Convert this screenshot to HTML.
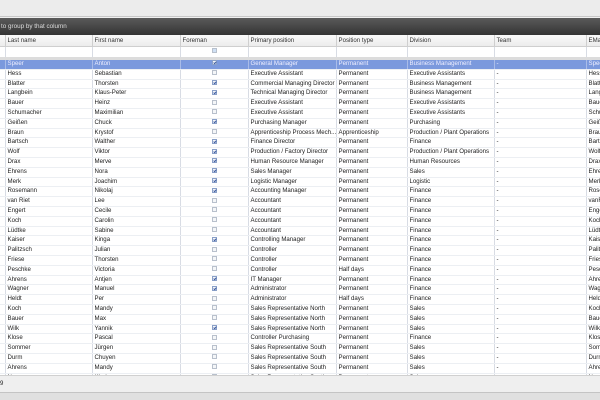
<!DOCTYPE html><html><head><meta charset="utf-8"><style>
*{margin:0;padding:0;box-sizing:border-box}
body{width:600px;height:400px;overflow:hidden;background:#f0f0f0;font-family:"Liberation Sans",sans-serif;font-size:6px;color:#222;position:relative}
#top{position:absolute;left:0;top:0;width:600px;height:17px;background:#ececec;border-bottom:1px solid #c8c8c8}
#grp{position:absolute;left:0;top:18px;width:600px;height:17px;background:linear-gradient(#5a5a5a,#343434);color:#ddd;font-size:6.3px;line-height:17px;padding-left:1px}
#grid{position:absolute;left:0;top:35px;width:600px;height:340px;overflow:hidden;background:#fff}
table{border-collapse:collapse;table-layout:fixed;width:620px}
td{border-right:1px solid #d8dce4;border-bottom:1px solid #eceff3;white-space:nowrap;overflow:hidden;padding-left:2px;height:9.8px;line-height:8.8px;font-size:6.1px}
tr.h td{height:11px;line-height:11px;background:linear-gradient(#fafafa,#ececec);border-right:1px solid #cfcfcf;border-bottom:1px solid #cfcfcf;color:#333;font-size:6.1px}
tr.f td{height:12px;background:#fff;border-bottom:3px solid #dcdcdc}
tr.s td{background:#7b99dd;color:#eef;border-right-color:#a9bce8}
td.c{text-align:center;padding:0}
.cb{display:inline-block;width:5px;height:5px;border:1px solid #b8c0cc;background:#f4f6f8;vertical-align:middle;position:relative;top:-0.5px}
.cb.k{border-color:#8aa0c8}
.cb.k:after{content:"";position:absolute;left:1px;top:0;width:1px;height:2px;border:solid #3a5aa0;border-width:0 1px 1px 0;transform:rotate(40deg)}
#foot{position:absolute;left:0;top:375px;width:600px;height:18px;background:#efefef;border-top:1px solid #d0d0d0;font-size:6px;line-height:17px}
#bot{position:absolute;left:0;top:392px;width:600px;height:8px;background:#e0e0e0;border-top:1px solid #c4c4c4}
</style></head><body>
<div id="top"></div>
<div id="grp">to group by that column</div>
<div id="grid"><table>
<colgroup><col style="width:5px"><col style="width:87px"><col style="width:88px"><col style="width:68px"><col style="width:88px"><col style="width:71px"><col style="width:87px"><col style="width:92px"><col style="width:34px"></colgroup>
<tr class="h"><td></td><td>Last name</td><td>First name</td><td>Foreman</td><td>Primary position</td><td>Position type</td><td>Division</td><td>Team</td><td>EMail</td></tr>
<tr class="f"><td></td><td></td><td></td><td class="c"><span class="cb" style="background:#cfe0f4"></span></td><td></td><td></td><td></td><td></td><td></td></tr>
<tr class="s"><td></td><td>Speer</td><td>Anton</td><td class="c"><span class="cb k"></span></td><td>General Manager</td><td>Permanent</td><td>Business Management</td><td>-</td><td>Speer</td></tr>
<tr><td></td><td>Hess</td><td>Sebastian</td><td class="c"><span class="cb"></span></td><td>Executive Assistant</td><td>Permanent</td><td>Executive Assistants</td><td>-</td><td>Hess</td></tr>
<tr><td></td><td>Blatter</td><td>Thorsten</td><td class="c"><span class="cb k"></span></td><td>Commercial Managing Director</td><td>Permanent</td><td>Business Management</td><td>-</td><td>Blatter</td></tr>
<tr><td></td><td>Langbein</td><td>Klaus-Peter</td><td class="c"><span class="cb k"></span></td><td>Technical Managing Director</td><td>Permanent</td><td>Business Management</td><td>-</td><td>Langbein</td></tr>
<tr><td></td><td>Bauer</td><td>Heinz</td><td class="c"><span class="cb"></span></td><td>Executive Assistant</td><td>Permanent</td><td>Executive Assistants</td><td>-</td><td>Bauer</td></tr>
<tr><td></td><td>Schumacher</td><td>Maximilian</td><td class="c"><span class="cb"></span></td><td>Executive Assistant</td><td>Permanent</td><td>Executive Assistants</td><td>-</td><td>Schum</td></tr>
<tr><td></td><td>Geißen</td><td>Chuck</td><td class="c"><span class="cb k"></span></td><td>Purchasing Manager</td><td>Permanent</td><td>Purchasing</td><td>-</td><td>Geißen</td></tr>
<tr><td></td><td>Braun</td><td>Krystof</td><td class="c"><span class="cb"></span></td><td>Apprenticeship Process Mech...</td><td>Apprenticeship</td><td>Production / Plant Operations</td><td>-</td><td>Braun</td></tr>
<tr><td></td><td>Bartsch</td><td>Walther</td><td class="c"><span class="cb k"></span></td><td>Finance Director</td><td>Permanent</td><td>Finance</td><td>-</td><td>Bartsch</td></tr>
<tr><td></td><td>Wolf</td><td>Viktor</td><td class="c"><span class="cb k"></span></td><td>Production / Factory Director</td><td>Permanent</td><td>Production / Plant Operations</td><td>-</td><td>Wolf</td></tr>
<tr><td></td><td>Drax</td><td>Merve</td><td class="c"><span class="cb k"></span></td><td>Human Resource Manager</td><td>Permanent</td><td>Human Resources</td><td>-</td><td>Drax</td></tr>
<tr><td></td><td>Ehrens</td><td>Nora</td><td class="c"><span class="cb k"></span></td><td>Sales Manager</td><td>Permanent</td><td>Sales</td><td>-</td><td>Ehrens</td></tr>
<tr><td></td><td>Merk</td><td>Joachim</td><td class="c"><span class="cb k"></span></td><td>Logistic Manager</td><td>Permanent</td><td>Logistic</td><td>-</td><td>Merk</td></tr>
<tr><td></td><td>Rosemann</td><td>Nikolaj</td><td class="c"><span class="cb k"></span></td><td>Accounting Manager</td><td>Permanent</td><td>Finance</td><td>-</td><td>Rosem</td></tr>
<tr><td></td><td>van Riet</td><td>Lee</td><td class="c"><span class="cb"></span></td><td>Accountant</td><td>Permanent</td><td>Finance</td><td>-</td><td>vanRiet</td></tr>
<tr><td></td><td>Engert</td><td>Cecile</td><td class="c"><span class="cb"></span></td><td>Accountant</td><td>Permanent</td><td>Finance</td><td>-</td><td>Engert</td></tr>
<tr><td></td><td>Koch</td><td>Carolin</td><td class="c"><span class="cb"></span></td><td>Accountant</td><td>Permanent</td><td>Finance</td><td>-</td><td>Koch</td></tr>
<tr><td></td><td>Lüdtke</td><td>Sabine</td><td class="c"><span class="cb"></span></td><td>Accountant</td><td>Permanent</td><td>Finance</td><td>-</td><td>Lüdtke</td></tr>
<tr><td></td><td>Kaiser</td><td>Kinga</td><td class="c"><span class="cb k"></span></td><td>Controlling Manager</td><td>Permanent</td><td>Finance</td><td>-</td><td>Kaiser</td></tr>
<tr><td></td><td>Palitzsch</td><td>Julian</td><td class="c"><span class="cb"></span></td><td>Controller</td><td>Permanent</td><td>Finance</td><td>-</td><td>Palitz</td></tr>
<tr><td></td><td>Friese</td><td>Thorsten</td><td class="c"><span class="cb"></span></td><td>Controller</td><td>Permanent</td><td>Finance</td><td>-</td><td>Friese</td></tr>
<tr><td></td><td>Peschke</td><td>Victoria</td><td class="c"><span class="cb"></span></td><td>Controller</td><td>Half days</td><td>Finance</td><td>-</td><td>Pesch</td></tr>
<tr><td></td><td>Ahrens</td><td>Antjen</td><td class="c"><span class="cb k"></span></td><td>IT Manager</td><td>Permanent</td><td>Finance</td><td>-</td><td>Ahrens</td></tr>
<tr><td></td><td>Wagner</td><td>Manuel</td><td class="c"><span class="cb k"></span></td><td>Administrator</td><td>Permanent</td><td>Finance</td><td>-</td><td>Wagner</td></tr>
<tr><td></td><td>Heldt</td><td>Per</td><td class="c"><span class="cb"></span></td><td>Administrator</td><td>Half days</td><td>Finance</td><td>-</td><td>Heldt</td></tr>
<tr><td></td><td>Koch</td><td>Mandy</td><td class="c"><span class="cb"></span></td><td>Sales Representative North</td><td>Permanent</td><td>Sales</td><td>-</td><td>Koch</td></tr>
<tr><td></td><td>Bauer</td><td>Max</td><td class="c"><span class="cb"></span></td><td>Sales Representative North</td><td>Permanent</td><td>Sales</td><td>-</td><td>Bauer</td></tr>
<tr><td></td><td>Wilk</td><td>Yannik</td><td class="c"><span class="cb k"></span></td><td>Sales Representative North</td><td>Permanent</td><td>Sales</td><td>-</td><td>Wilk</td></tr>
<tr><td></td><td>Klose</td><td>Pascal</td><td class="c"><span class="cb"></span></td><td>Controller Purchasing</td><td>Permanent</td><td>Finance</td><td>-</td><td>Klose</td></tr>
<tr><td></td><td>Sommer</td><td>Jürgen</td><td class="c"><span class="cb"></span></td><td>Sales Representative South</td><td>Permanent</td><td>Sales</td><td>-</td><td>Somm</td></tr>
<tr><td></td><td>Durm</td><td>Chuyen</td><td class="c"><span class="cb"></span></td><td>Sales Representative South</td><td>Permanent</td><td>Sales</td><td>-</td><td>Durm</td></tr>
<tr><td></td><td>Ahrens</td><td>Mandy</td><td class="c"><span class="cb"></span></td><td>Sales Representative South</td><td>Permanent</td><td>Sales</td><td>-</td><td>Ahrens</td></tr>
<tr><td></td><td>Neuven</td><td>Khoi</td><td class="c"><span class="cb"></span></td><td>Sales Representative South</td><td>Permanent</td><td>Sales</td><td>-</td><td>Neuven</td></tr>
</table></div>
<div id="foot">9</div>
<div id="bot"></div>
</body></html>
